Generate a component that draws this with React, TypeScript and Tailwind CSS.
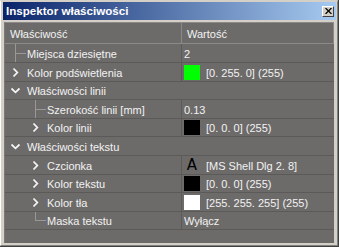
import React from "react";

type Row = {
  label: string;
  level: number;
  kind: "leaf" | "collapsed" | "expanded";
  section?: boolean;
  last?: boolean;
  swatch?: string;
  font?: boolean;
  value?: string;
  h: number;
};

const rows: Row[] = [
  { label: "Miejsca dziesiętne", level: 0, kind: "leaf", value: "2", h: 19 },
  { label: "Kolor podświetlenia", level: 0, kind: "collapsed", swatch: "#00ff00", value: "[0. 255. 0] (255)", h: 19 },
  { label: "Właściwości linii", level: 0, kind: "expanded", section: true, h: 18 },
  { label: "Szerokość linii [mm]", level: 1, kind: "leaf", value: "0.13", h: 19 },
  { label: "Kolor linii", level: 1, kind: "collapsed", swatch: "#000000", value: "[0. 0. 0] (255)", h: 18 },
  { label: "Właściwości tekstu", level: 0, kind: "expanded", section: true, h: 19 },
  { label: "Czcionka", level: 1, kind: "collapsed", font: true, value: "[MS Shell Dlg 2. 8]", h: 19 },
  { label: "Kolor tekstu", level: 1, kind: "collapsed", swatch: "#000000", value: "[0. 0. 0] (255)", h: 18 },
  { label: "Kolor tła", level: 1, kind: "collapsed", swatch: "#ffffff", value: "[255. 255. 255] (255)", h: 19 },
  { label: "Maska tekstu", level: 1, kind: "leaf", last: true, value: "Wyłącz", h: 18 },
];

function Branch({ row }: { row: Row }) {
  const w = 22 + 20 * row.level;
  const h = row.h - 1;
  const cx = 10 + 20 * row.level + 0.5;
  const cy = Math.floor(h / 2) + 0.5;
  return (
    <svg width={w} height={h} className="shrink-0 block">
      {row.kind === "leaf" && (
        <g stroke="#9a9897" strokeWidth="1" fill="none" shapeRendering="crispEdges">
          <line x1={cx} y1={0} x2={cx} y2={row.last ? cy : h} />
          <line x1={cx} y1={cy} x2={cx + 10} y2={cy} />
        </g>
      )}
      {row.kind === "collapsed" && (
        <polyline
          points={`${cx - 2},${cy - 4} ${cx + 1.8},${cy} ${cx - 2},${cy + 4}`}
          stroke="#f4f4f4"
          strokeWidth="1.8"
          fill="none"
        />
      )}
      {row.kind === "expanded" && (
        <polyline
          points={`${cx - 4},${cy - 2} ${cx},${cy + 1.8} ${cx + 4},${cy - 2}`}
          stroke="#f4f4f4"
          strokeWidth="1.8"
          fill="none"
        />
      )}
    </svg>
  );
}

export default function App() {
  return (
    <div className="w-[339px] h-[247px] bg-[#d4d0c8] border-r border-b border-[#404040] font-['Liberation_Sans',Arial,sans-serif] overflow-hidden">
      <div className="w-full h-full border-t-2 border-l border-r border-b border-t-[#d4d0c8] border-l-[#ffffff] border-r-[#808080] border-b-[#808080] flex flex-col pl-[2px] pr-[1px]">
        {/* Title bar */}
        <div className="h-[18px] shrink-0 flex items-center justify-between bg-[linear-gradient(to_right,#0a246a,#a6caf0)] pl-[3px] pr-[2px]">
          <span className="text-white font-bold text-[11.6px] leading-none">Inspektor właściwości</span>
          <div className="w-[12px] h-[11px] bg-[#d4d0c8] border-t border-l border-b border-r border-t-white border-l-white border-b-[#404040] border-r-[#404040] flex items-center justify-center">
            <svg width="7" height="6" className="block">
              <g stroke="#000" strokeWidth="1.2">
                <line x1="0.5" y1="0" x2="6.5" y2="6" />
                <line x1="6.5" y1="0" x2="0.5" y2="6" />
              </g>
            </svg>
          </div>
        </div>
        {/* Grid */}
        <div className="mt-[2px] ml-[1px] mr-[2px] mb-[2px] flex-1 bg-[#6d6b6a] border-l border-[#7c7a78] flex flex-col text-[11px] text-[#f2f2f2]">
          {/* Header */}
          <div className="h-[22px] flex shrink-0 border-b border-[#8c8a88]">
            <div className="w-[176px] border-t border-[#8c8a88] flex items-center pl-[5px] pt-[2px]">
              Właściwość
            </div>
            <div className="flex-1 border-t border-l border-r border-[#8c8a88] flex items-center pl-[5px] pt-[2px]">
              Wartość
            </div>
          </div>
          {rows.map((r, i) => (
            <div
              key={i}
              className="flex shrink-0 border-b border-[#5c5a59]"
              style={{ height: r.h }}
            >
              <div className={`${r.section ? "flex-1" : "w-[176px]"} flex items-center`}>
                <Branch row={r} />
                <span className="pt-[2px] whitespace-nowrap">{r.label}</span>
              </div>
              {!r.section && (
                <div className="flex-1 border-l border-[#5c5a59] flex items-center pl-[2px] gap-[6px] whitespace-nowrap">
                  {r.swatch && (
                    <div className="w-[16px] h-[15px] shrink-0" style={{ background: r.swatch }} />
                  )}
                  {r.font && (
                    <span className="w-[16px] text-center text-black text-[15px] leading-none font-['DejaVu_Sans',sans-serif]">
                      A
                    </span>
                  )}
                  <span className="pt-[2px]">{r.value}</span>
                </div>
              )}
            </div>
          ))}
        </div>
      </div>
    </div>
  );
}
